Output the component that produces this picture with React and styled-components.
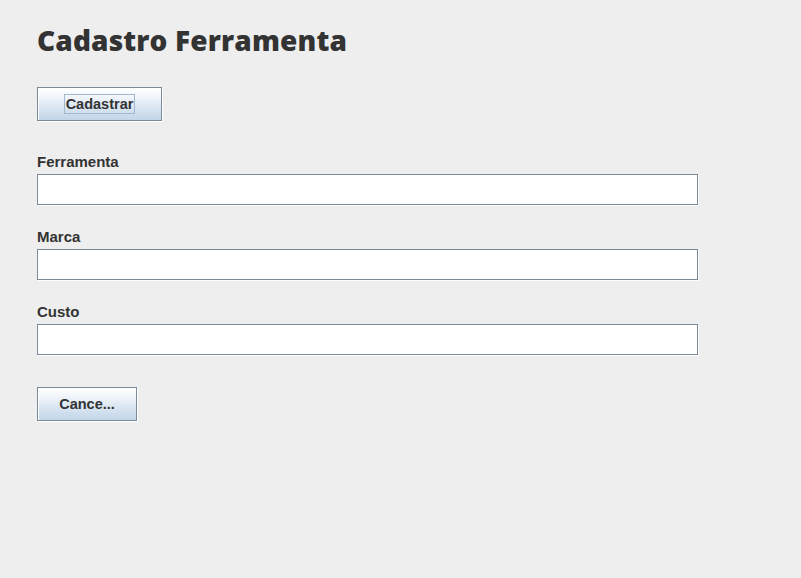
import styled, { createGlobalStyle } from 'styled-components';

const GlobalStyle = createGlobalStyle`
    html, body {
        margin: 0;
        padding: 0;
        background: #EEEEEE;
    }
`

export default function App() {
    return (
        <Container>
            <GlobalStyle />
            <Title>Cadastro Ferramenta</Title>

            <MetalButton width={125} focused>
                <span>Cadastrar</span>
            </MetalButton>

            <Form>
                <Field>
                    <Label>Ferramenta</Label>
                    <Input />
                </Field>
                <Field>
                    <Label>Marca</Label>
                    <Input />
                </Field>
                <Field>
                    <Label>Custo</Label>
                    <Input />
                </Field>
            </Form>

            <MetalButton width={100} gap={32}>
                <span>Cance...</span>
            </MetalButton>
        </Container>
    )
}

const Container = styled.div`
    width: 801px;
    height: 578px;
    box-sizing: border-box;
    padding: 22px 0 0 37px;

    display: flex;
    flex-direction: column;
    align-items: flex-start;

    background-color: #EEEEEE;
    font-family: "Liberation Sans", Arial, sans-serif;
`

const Title = styled.h1`
    margin: 0;
    font-family: "Open Sans", "Noto Sans", sans-serif;
    font-weight: 800;
    font-size: 28px;
    line-height: 36px;
    letter-spacing: 0.15px;
    color: #333333;
`

const MetalButton = styled.div`
    width: ${props => props.width}px;
    height: 34px;
    box-sizing: border-box;
    margin-top: ${props => props.gap || 29}px;

    display: flex;
    align-items: center;
    justify-content: center;

    border: 1px solid #7A8A99;
    box-shadow: inset 1px 1px 0 #FFFFFF, 1px 1px 0 #FFFFFF;
    background: linear-gradient(to bottom, #FFFFFF 0%, #F2F6FB 25%, #DDE8F3 55%, #C2D5E8 100%);

    span {
        padding: 0 1px;
        border: 1px solid ${props => props.focused ? '#A3B8CC' : 'transparent'};
        font-weight: 700;
        font-size: 14.5px;
        line-height: 18px;
        color: #333333;
    }
`

const Form = styled.div`
    display: flex;
    flex-direction: column;
    gap: 23px;
    margin-top: 32px;
`

const Field = styled.div`
    display: flex;
    flex-direction: column;
    gap: 4px;
`

const Label = styled.div`
    font-weight: 700;
    font-size: 15px;
    line-height: 17px;
    color: #333333;
`

const Input = styled.div`
    width: 661px;
    height: 31px;
    box-sizing: border-box;

    border: 1px solid #7A8A99;
    box-shadow: 1px 1px 0 #FFFFFF;
    background-color: #FFFFFF;
`
